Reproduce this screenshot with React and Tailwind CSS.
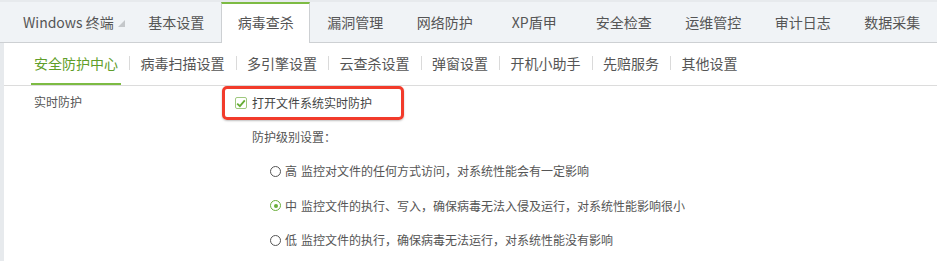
const tabs = ["基本设置", "病毒查杀", "漏洞管理", "网络防护", "XP盾甲", "安全检查", "运维管控", "审计日志", "数据采集"];
const subTabs = ["安全防护中心", "病毒扫描设置", "多引擎设置", "云查杀设置", "弹窗设置", "开机小助手", "先赔服务", "其他设置"];

const levels = [
  { key: "高", desc: "监控对文件的任何方式访问，对系统性能会有一定影响" },
  { key: "中", desc: "监控文件的执行、写入，确保病毒无法入侵及运行，对系统性能影响很小" },
  { key: "低", desc: "监控文件的执行，确保病毒无法运行，对系统性能没有影响" },
];

const font = { fontFamily: '"Noto Sans CJK SC", "Noto Sans", sans-serif' };

const Radio = ({ checked }) => (
  <span
    className={
      "flex h-[11px] w-[11px] items-center justify-center rounded-full border-[1.5px] " +
      (checked ? "border-[#6aae3a]" : "border-[#555]")
    }
  >
    {checked && <span className="h-[4px] w-[4px] rounded-full bg-[#6aae3a]" />}
  </span>
);

export default function App() {
  const active = "病毒查杀";
  return (
    <div className="h-[261px] w-[937px] overflow-hidden bg-[#e7eaed] pt-[2px] text-[#555]" style={font}>
      {/* top tabs */}
      <div className="flex h-[41px] border-b border-[#cdd0d3] bg-[#f0f3f6]">
        <div className="ml-[4px] flex h-[40px] w-[128px] items-center pl-[19px] text-[14px] text-[#555]">
          <span>Windows 终端</span>
          <svg width="7" height="7" viewBox="0 0 7 7" className="ml-[4px] mt-[3px]">
            <path d="M7 0 L7 7 L0 7 Z" fill="#c4c7ca" />
          </svg>
        </div>
        {tabs.map((t) =>
          t === active ? (
            <div
              key={t}
              className="-mb-px flex h-[41px] w-[90px] items-center justify-center border-x border-t-2 border-x-[#cdd0d3] border-t-[#7dbb43] bg-white pb-[2px] text-[14px] text-[#555]"
            >
              {t}
            </div>
          ) : (
            <div key={t} className="flex h-[40px] w-[90px] items-center justify-center text-[14px] text-[#555]">
              {t}
            </div>
          )
        )}
      </div>

      <div className="ml-[4px] h-full bg-white">
        {/* sub tabs */}
        <div className="flex h-[43px] items-end border-b border-[#dcdcdc] pl-[27px]">
          {subTabs.map((t, i) => (
            <div key={t} className="flex items-center">
              {i > 0 && <span className="mb-[2px] ml-[8px] mr-[7.5px] h-[14px] w-px bg-[#dadada]" />}
              <span
                className={
                  "flex h-[42px] items-center border-b-2 px-[3px] text-[14px] " +
                  (i === 0 ? "border-[#7dbb43] text-[#5f9e2a]" : "border-transparent text-[#555]")
                }
              >
                {t}
              </span>
            </div>
          ))}
        </div>

        {/* content */}
        <div className="flex pl-[30px] text-[12px]">
          <div className="w-[188px] pt-[7px]">实时防护</div>
          <div>
            <div className="flex h-[34px] w-[182px] items-center rounded-[5px] border-[3px] border-[#f23b2b] pl-[10px] shadow-[0_1px_2px_rgba(0,0,0,0.25)]">
              <span className="flex h-[12px] w-[12px] items-center justify-center rounded-[2px] border border-[#9fc87e] bg-white">
                <svg width="10" height="9" viewBox="0 0 10 9">
                  <path d="M1.2 4.6 L3.9 7.2 L8.8 1.4" fill="none" stroke="#66ad34" strokeWidth="1.8" />
                </svg>
              </span>
              <span className="ml-[5px] text-[#444]">打开文件系统实时防护</span>
            </div>
            <div className="flex h-[34px] items-center pl-[30px]">防护级别设置：</div>
            {levels.map((l, i) => (
              <div key={l.key} className="flex h-[34.5px] items-center pl-[48px]">
                <Radio checked={i === 1} />
                <span className="ml-[4px]">{l.key}</span>
                <span className="ml-[4px]">{l.desc}</span>
              </div>
            ))}
          </div>
        </div>
      </div>
    </div>
  );
}
